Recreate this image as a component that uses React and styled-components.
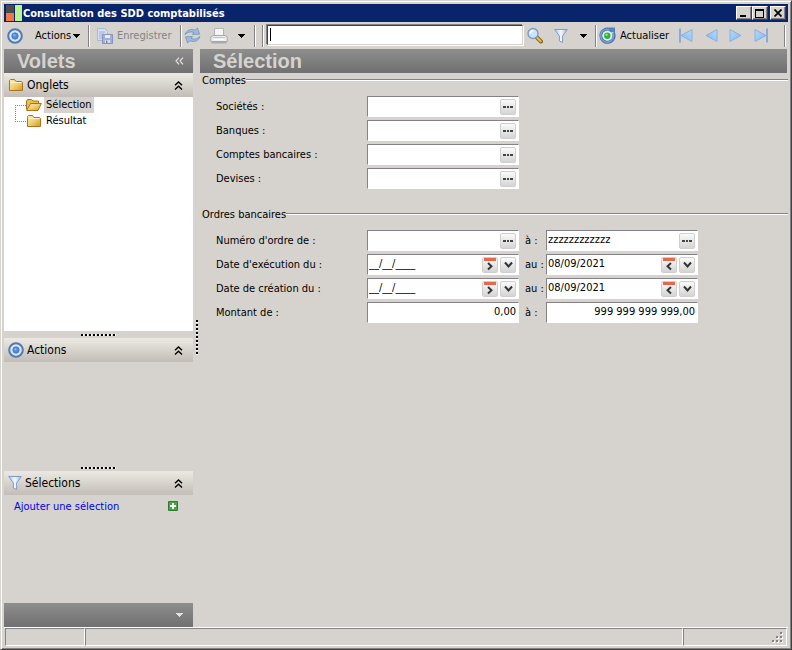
import styled, { createGlobalStyle, css } from "styled-components"

const GlobalStyle = createGlobalStyle`
  *, *::before, *::after {
    box-sizing: border-box;
  }
  body {
    margin: 0;
    background: #d6d3ce;
  }
  body, button, input {
    font-family: "DejaVu Sans Condensed", "DejaVu Sans", sans-serif;
    font-size: 11px;
    color: #000;
  }
  button {
    padding: 0;
    border: 0;
    background: none;
  }
  svg {
    display: block;
    flex: none;
  }
`

/* ---------- icons ---------- */

const Gradients = () => (
  <Defs width="0" height="0" aria-hidden="true">
    <defs>
      <linearGradient id="gold" x1="0" y1="0" x2="1" y2="1">
        <stop offset="0" stopColor="#fdeeb0" />
        <stop offset="0.5" stopColor="#f2cf72" />
        <stop offset="1" stopColor="#d8942a" />
      </linearGradient>
      <linearGradient id="sky" x1="0" y1="0" x2="1" y2="1">
        <stop offset="0" stopColor="#b4dcfa" />
        <stop offset="1" stopColor="#7fb6ec" />
      </linearGradient>
      <linearGradient id="funnel" x1="0" y1="0" x2="1" y2="0">
        <stop offset="0" stopColor="#a9c8f0" />
        <stop offset="0.5" stopColor="#f4f9ff" />
        <stop offset="1" stopColor="#94b6e6" />
      </linearGradient>
    </defs>
  </Defs>
)

const TargetIcon = () => (
  <svg width="16" height="16" viewBox="0 0 16 16">
    <circle cx="8" cy="8" r="6.8" fill="#dde8f6" stroke="#5079b8" strokeWidth="2" />
    <circle cx="8" cy="8" r="3.2" fill="#4f8edb" />
    <circle cx="8" cy="8" r="3.2" fill="none" stroke="#3c6fbb" strokeWidth="0.8" />
    <circle cx="7.4" cy="7.2" r="1.1" fill="#7dbcf5" />
  </svg>
)

const FolderIcon = () => (
  <svg width="16" height="14" viewBox="0 0 16 14">
    <path d="M1.5 12.5V2.5L2.5 1.5H6.5L8 3.5H13.5L14.5 4.5V12.5Z" fill="url(#gold)" stroke="#a8741c" />
    <path d="M2.5 4.5H13.5" stroke="#fff6d0" />
  </svg>
)

const OpenFolderIcon = () => (
  <svg width="16" height="14" viewBox="0 0 16 14">
    <path d="M0.5 11.5V3L1.5 1.5H5.5L7 3H12.5V5.5" fill="#e9bd58" stroke="#a8741c" />
    <path d="M0.7 12.5L4.5 5.5H15.3L12 12.5Z" fill="url(#gold)" stroke="#a8741c" />
  </svg>
)

const SaveIcon = () => (
  <svg width="17" height="17" viewBox="0 0 17 17">
    <path d="M1.5 1.5H8.5L11.5 4.5V13.5H1.5Z" fill="#d4dff0" stroke="#a9b9d6" />
    <path d="M3 5H9M3 7H8M3 9H6M3 11H6" stroke="#9fb2d3" />
    <path d="M6.5 7.5H16.5V16.5H6.5Z" fill="#a2b0d8" stroke="#8493c0" />
    <path d="M9 8H14V11H9Z" fill="#e9edf7" />
    <path d="M9 13H14V16H9Z" fill="#d9deed" />
    <path d="M10 13.5H11.5V16H10Z" fill="#7181b0" />
  </svg>
)

const SyncIcon = () => (
  <svg width="17" height="17" viewBox="0 0 17 17">
    <path d="M1 7.5C2.5 3 7 1.5 11 3.2L13.5 1L15.5 7.2L8.5 7.4L10 5.6C7 4.2 4 5 1 7.5Z" fill="#9dbcde" stroke="#6f93be" strokeWidth="0.8" />
    <path d="M16 9.5C14.5 14 10 15.5 6 13.8L3.5 16L1.5 9.8L8.5 9.6L7 11.4C10 12.8 13 12 16 9.5Z" fill="#9dbcde" stroke="#6f93be" strokeWidth="0.8" />
  </svg>
)

const PrinterIcon = () => (
  <svg width="18" height="18" viewBox="0 0 18 18">
    <path d="M4.5 1.5H13.5V9H4.5Z" fill="#f6f6f6" stroke="#b4b4b4" />
    <path d="M0.8 10L3 8.5H15L17.2 10V14.5H0.8Z" fill="#eee" stroke="#a9a9a9" />
    <path d="M3 10.5H15" stroke="#c4c4c4" />
    <path d="M1.5 15H16.5V16.5H1.5Z" fill="#aaa" />
    <path d="M4 12.5H14" stroke="#fff" />
  </svg>
)

const SearchIcon = () => (
  <svg width="16" height="17" viewBox="0 0 16 17">
    <path d="M9.5 10L14 14.5" stroke="#86601e" strokeWidth="4" strokeLinecap="round" />
    <path d="M10 10.5L13.7 14.2" stroke="#eab94a" strokeWidth="2.2" strokeLinecap="round" />
    <circle cx="6" cy="6.5" r="5" fill="#cbe4fb" stroke="#7c9cd0" strokeWidth="1.4" />
    <path d="M3.3 6.5A3 3 0 0 1 6.3 3.7" stroke="#fff" strokeWidth="1.5" fill="none" />
  </svg>
)

const FunnelIcon = () => (
  <svg width="14" height="16" viewBox="0 0 14 16">
    <path d="M0.7 1.5H13.3L8.6 8V14.5L5.4 13V8Z" fill="url(#funnel)" stroke="#7e9cca" />
  </svg>
)

const ReloadIcon = () => (
  <svg width="17" height="17" viewBox="0 0 17 17">
    <path d="M14.6 6.2A6.6 6.6 0 1 1 10.5 2.4" fill="none" stroke="#4a6fae" strokeWidth="3" />
    <path d="M14.3 6.5A6.5 6.5 0 1 1 10.4 2.6" fill="none" stroke="#739fda" strokeWidth="1.6" />
    <path d="M10 0.5H16V6.5L13.5 5L11.5 6L10 4Z" fill="#5482c4" />
    <circle cx="8.3" cy="8.7" r="4.8" fill="#e9f3ea" />
    <circle cx="8.3" cy="8.7" r="3.2" fill="#2eb13e" />
    <circle cx="7.6" cy="7.7" r="1.2" fill="#8ae68c" />
  </svg>
)

const NavIcon = ({ back, bar }) => (
  <svg width="16" height="15" viewBox="0 0 16 15">
    <g transform={back ? 'translate(16 0) scale(-1 1)' : undefined}>
      <path d="M2 1.5L13 7.5L2 13.5Z" fill="url(#sky)" stroke="#8caee0" />
      {bar && <path d="M14 0.5V14.5" stroke="#8ca8dc" strokeWidth="2" />}
    </g>
  </svg>
)

const Caret = ({ color = '#000' }) => (
  <svg width="8" height="4" viewBox="0 0 8 4" shapeRendering="crispEdges">
    <path d="M0 0H8L4 4Z" fill={color} />
  </svg>
)

const Chevrons = () => (
  <svg width="9" height="9" viewBox="0 0 9 9" fill="none" stroke="#000" strokeWidth="1.4">
    <path d="M1 4.2L4.5 1L8 4.2M1 8.5L4.5 5.3L8 8.5" />
  </svg>
)

const CollapseIcon = () => (
  <svg width="9" height="8" viewBox="0 0 9 8" fill="none" stroke="#e4e2de" strokeWidth="1.2">
    <path d="M4 0.7L1 4L4 7.3M8 0.7L5 4L8 7.3" />
  </svg>
)

const PlusIcon = () => (
  <svg width="10" height="10" viewBox="0 0 10 10">
    <rect width="10" height="10" rx="1" fill="#2e7d2e" />
    <rect x="1" y="1" width="8" height="8" fill="#4ca544" />
    <path d="M5 2V8M2 5H8" stroke="#fff" strokeWidth="2" />
  </svg>
)

const DotsIcon = () => (
  <svg width="10" height="5" viewBox="0 0 10 5" fill="#444">
    <rect x="0" y="2" width="3" height="2" />
    <rect x="4" y="2" width="2" height="2" />
    <rect x="7" y="2" width="3" height="2" />
  </svg>
)

const DownIcon = () => (
  <svg width="9" height="8" viewBox="0 0 9 8" fill="none" stroke="#333" strokeWidth="2">
    <path d="M1 1.5L4.5 5.5L8 1.5" />
  </svg>
)

const CalendarIcon = ({ back }) => (
  <svg width="12" height="13" viewBox="0 0 12 13" fill="none">
    <rect width="12" height="3" fill="#e2694b" />
    <path d={back ? 'M8 5L4.5 8.2L8 11.5' : 'M4 5L7.5 8.2L4 11.5'} stroke="#333" strokeWidth="1.9" />
  </svg>
)

const LogoIcon = () => (
  <svg width="16" height="16" viewBox="0 0 16 16" shapeRendering="crispEdges">
    <rect width="8" height="8" fill="#4b4b49" />
    <rect y="8" width="8" height="8" fill="#f0764c" />
    <rect x="9" width="7" height="16" fill="#b9f58e" />
  </svg>
)

const SizeGrip = () => (
  <svg width="12" height="12" viewBox="0 0 12 12" shapeRendering="crispEdges">
    {[[8, 0], [4, 4], [8, 4], [0, 8], [4, 8], [8, 8]].map(([x, y]) => (
      <g key={`${x}-${y}`}>
        <rect x={x + 1} y={y + 1} width="2" height="2" fill="#fff" />
        <rect x={x} y={y} width="2" height="2" fill="#848284" />
      </g>
    ))}
  </svg>
)

/* ---------- parts ---------- */

const Tool = ({ icon, children, label, disabled }) => (
  <ToolButton type="button" aria-label={label} disabled={disabled}>
    {icon}
    {children}
  </ToolButton>
)

const Panel = ({ icon, title }) => (
  <PanelHeader>
    {icon}
    <h2>{title}</h2>
    <button type="button" aria-label={`Réduire ${title}`}><Chevrons /></button>
  </PanelHeader>
)

const Field = ({ id, value = '', kind = 'lookup', right }) => (
  <FieldBox>
    <input id={id} defaultValue={value} className={kind === 'amount' ? 'amount' : ''} />
    {kind === 'lookup' && <FieldButton type="button" aria-label="Rechercher"><DotsIcon /></FieldButton>}
    {kind === 'date' && (
      <>
        <FieldButton type="button" aria-label="Borne"><CalendarIcon back={right} /></FieldButton>
        <FieldButton type="button" aria-label="Calendrier"><DownIcon /></FieldButton>
      </>
    )}
  </FieldBox>
)

const accounts = [
  { id: 'societes', label: 'Sociétés :' },
  { id: 'banques', label: 'Banques :' },
  { id: 'comptes', label: 'Comptes bancaires :' },
  { id: 'devises', label: 'Devises :' },
]

const orders = [
  { id: 'numero', label: "Numéro d'ordre de :", kind: 'lookup', from: '', link: 'à :', to: 'zzzzzzzzzzzz' },
  { id: 'execution', label: "Date d'exécution du :", kind: 'date', from: '__/__/____', link: 'au :', to: '08/09/2021' },
  { id: 'creation', label: 'Date de création du :', kind: 'date', from: '__/__/____', link: 'au :', to: '08/09/2021' },
  { id: 'montant', label: 'Montant de :', kind: 'amount', from: '0,00', link: 'à :', to: '999 999 999 999,00' },
]

export default function App() {
  return (
    <Window>
      <GlobalStyle />
      <Gradients />
      <TitleBar>
        <LogoIcon />
        <h1>Consultation des SDD comptabilisés</h1>
        <WindowButton type="button" aria-label="Réduire">
          <svg width="8" height="8"><path d="M0 6H6V8H0Z" /></svg>
        </WindowButton>
        <WindowButton type="button" aria-label="Agrandir">
          <svg width="10" height="9" shapeRendering="crispEdges"><path d="M0 0H9V9H0ZM1 2V8H8V2Z" fillRule="evenodd" /></svg>
        </WindowButton>
        <WindowButton type="button" aria-label="Fermer" $apart>
          <svg width="8" height="8" stroke="#000" strokeWidth="1.7"><path d="M0.5 0.5L7.5 7.5M7.5 0.5L0.5 7.5" /></svg>
        </WindowButton>
      </TitleBar>

      <Toolbar>
        <ToolGroup $width={85}>
          <Tool icon={<TargetIcon />} label="Cible" />
          <Tool><ToolText>Actions</ToolText><Caret /></Tool>
        </ToolGroup>
        <ToolGroup $width={92}>
          <Tool icon={<SaveIcon />} disabled>Enregistrer</Tool>
        </ToolGroup>
        <ToolGroup $width={74} $gap={9}>
          <Tool icon={<SyncIcon />} label="Synchroniser" />
          <Tool icon={<PrinterIcon />} label="Imprimer" />
          <Tool icon={<Caret />} label="Options d'impression" />
        </ToolGroup>
        <ToolGroup $width={8} />
        <SearchBox>
          <TextCaret />
          <input aria-label="Recherche" />
        </SearchBox>
        <ToolGroup $width={72} $gap={11}>
          <Tool icon={<SearchIcon />} label="Rechercher" />
          <Tool icon={<FunnelIcon />} label="Filtrer" />
          <Tool icon={<Caret />} label="Options de filtre" />
        </ToolGroup>
        <ToolGroup $width={189} $gap={9}>
          <Tool icon={<ReloadIcon />}>Actualiser</Tool>
          <Tool icon={<NavIcon back bar />} label="Premier" />
          <Tool icon={<NavIcon back />} label="Précédent" />
          <Tool icon={<NavIcon />} label="Suivant" />
          <Tool icon={<NavIcon bar />} label="Dernier" />
        </ToolGroup>
      </Toolbar>

      <Body>
        <Sidebar>
          <Banner>
            <h2>Volets</h2>
            <button type="button" aria-label="Masquer les volets"><CollapseIcon /></button>
          </Banner>
          <Panel icon={<FolderIcon />} title="Onglets" />
          <Tree>
            <li><OpenFolderIcon /><TreeLink href="#selection" $active>Sélection</TreeLink></li>
            <li><FolderIcon /><TreeLink href="#resultat">Résultat</TreeLink></li>
          </Tree>
          <Splitter><Grip /></Splitter>
          <Panel icon={<TargetIcon />} title="Actions" />
          <PanelBody $height={102} />
          <Splitter><Grip /></Splitter>
          <Panel icon={<FunnelIcon />} title="Sélections" />
          <PanelBody $height={108}>
            <AddLink href="#ajouter">Ajouter une sélection <PlusIcon /></AddLink>
          </PanelBody>
          <SidebarFooter type="button" aria-label="Plus de volets">
            <Caret color="#e4e2de" />
          </SidebarFooter>
        </Sidebar>
        <Splitter $vertical><Grip $vertical /></Splitter>
        <Main>
          <Banner $main><h2>Sélection</h2></Banner>
          <Group>
            <h3>Comptes</h3>
            <Rows>
              {accounts.map(item => (
                <Row key={item.id}>
                  <label htmlFor={item.id}>{item.label}</label>
                  <Field id={item.id} />
                </Row>
              ))}
            </Rows>
          </Group>
          <Group>
            <h3>Ordres bancaires</h3>
            <Rows>
              {orders.map(item => (
                <Row key={item.id}>
                  <label htmlFor={item.id}>{item.label}</label>
                  <Field id={item.id} kind={item.kind} value={item.from} />
                  <label htmlFor={`${item.id}-fin`} className="link">{item.link}</label>
                  <Field id={`${item.id}-fin`} kind={item.kind} value={item.to} right />
                </Row>
              ))}
            </Rows>
          </Group>
        </Main>
      </Body>

      <StatusBar>
        <span />
        <span />
        <span><SizeGrip /></span>
      </StatusBar>
    </Window>
  )
}

/* ---------- styles ---------- */

const Defs = styled.svg`
  position: absolute;
`
const Window = styled.div`
  display: flex;
  flex-direction: column;
  min-height: 100vh;
  padding: 3px;
  border: 1px solid;
  border-color: #d6d3ce #424142 #424142 #d6d3ce;
  box-shadow: inset 1px 1px 0 #fff, inset -1px -1px 0 #848284;
`
const TitleBar = styled.header`
  display: flex;
  align-items: center;
  height: 18px;
  padding: 0 2px;
  background: #08246b;
  h1 {
    flex: 1;
    margin: 0 0 0 1px;
    font-size: 11px;
    color: #fff;
  }
`
const WindowButton = styled.button`
  display: flex;
  align-items: center;
  justify-content: center;
  width: 16px;
  height: 14px;
  margin-left: ${props => props.$apart ? '2px' : '0'};
  background: #d6d3ce;
  border: 1px solid;
  border-color: #fff #424142 #424142 #fff;
  box-shadow: inset -1px -1px 0 #848284;
`
const Toolbar = styled.div`
  display: flex;
  align-items: center;
  height: 27px;
  padding-right: 3px;
`
const ToolGroup = styled.div`
  display: flex;
  flex: none;
  align-items: center;
  gap: ${props => props.$gap ?? 12}px;
  width: ${props => props.$width}px;
  height: 22px;
  padding-left: ${props => props.$width > 20 ? '3px' : '0'};
  border-right: 1px solid #848284;
  box-shadow: 1px 0 0 #fff;
`
const ToolButton = styled.button`
  display: flex;
  align-items: center;
  gap: 4px;
  white-space: nowrap;
  &:disabled {
    margin-left: 4px;
    color: #848284;
  }
`
const ToolText = styled.span`
  margin-right: -3px;
`
const SearchBox = styled.div`
  display: flex;
  flex: 1;
  height: 20px;
  margin: 0 1px 2px 4px;
  padding: 1px;
  background: #fff;
  border: 1px solid;
  border-color: #424142 #d6d3ce #d6d3ce #424142;
  box-shadow: -1px -1px 0 #848284, 1px 1px 0 #fff;
  input {
    flex: 1;
    min-width: 0;
    padding: 0;
    border: 0;
    outline: 0;
  }
`
const TextCaret = styled.i`
  width: 1px;
  height: 13px;
  margin: 1px;
  background: #000;
`
const Body = styled.div`
  display: flex;
  flex: 1;
`
const Sidebar = styled.aside`
  display: flex;
  flex-direction: column;
  width: 189px;
`
const Banner = styled.div`
  display: flex;
  align-items: center;
  justify-content: space-between;
  flex: none;
  height: 24px;
  padding: 0 9px 0 13px;
  margin-right: ${props => props.$main ? '1px' : '0'};
  background: linear-gradient(#8e8e8e, #707070);
  h2 {
    margin: 0;
    font: bold 20px/24px "Liberation Sans", Arial, sans-serif;
    color: #d6d3ce;
  }
`
const PanelHeader = styled.div`
  display: flex;
  align-items: center;
  flex: none;
  gap: 3px;
  height: 24px;
  padding: 0 10px 0 4px;
  background: linear-gradient(#ece9e3, #c2bdb6);
  h2 {
    flex: 1;
    margin: 0;
    font-size: 12px;
    font-weight: normal;
  }
`
const PanelBody = styled.div`
  flex: none;
  height: ${props => props.$height}px;
`
const Tree = styled.ul`
  flex: 1;
  margin: 0;
  padding: 0 0 0 11px;
  background: #fff;
  list-style: none;
  li {
    display: flex;
    align-items: center;
    height: 16px;
  }
  li::before {
    content: "";
    align-self: flex-start;
    width: 11px;
    height: 9px;
    border-bottom: 1px dotted #848284;
  }
  li + li::before {
    height: 17px;
    margin-top: -8px;
    border-left: 1px dotted #848284;
  }
`
const TreeLink = styled.a`
  margin-left: 2px;
  padding: 0 2px;
  line-height: 16px;
  color: #000;
  text-decoration: none;
  background: ${props => props.$active ? '#d6d3ce' : 'none'};
`
const Splitter = styled.div`
  display: flex;
  flex: none;
  align-items: center;
  justify-content: center;
  ${props => props.$vertical ? css`width: 7px;` : css`height: 7px;`}
`
const Grip = styled.div`
  width: ${props => props.$vertical ? '2px' : '36px'};
  height: ${props => props.$vertical ? '36px' : '2px'};
  background: repeating-linear-gradient(${props => props.$vertical ? '180deg' : '90deg'}, #000 0 2px, #fff 2px 3px, #d6d3ce 3px 4px);
`
const AddLink = styled.a`
  display: flex;
  align-items: center;
  justify-content: space-between;
  height: 22px;
  padding: 0 15px 0 10px;
  color: #0000f0;
  text-decoration: none;
`
const SidebarFooter = styled.button`
  display: flex;
  align-items: center;
  justify-content: flex-end;
  height: 24px;
  padding-right: 10px;
  background: linear-gradient(#8e8e8e, #707070);
`
const Main = styled.main`
  flex: 1;
`
const Group = styled.section`
  margin-bottom: 10px;
  h3 {
    display: flex;
    align-items: center;
    height: 14px;
    margin: 0;
    padding-left: 2px;
    font-size: 11px;
    font-weight: normal;
  }
  h3::after {
    content: "";
    flex: 1;
    height: 2px;
    background: linear-gradient(#848284 50%, #fff 50%);
  }
`
const Rows = styled.div`
  display: flex;
  flex-direction: column;
  gap: 3px;
  padding: 9px 0 8px 16px;
`
const Row = styled.div`
  display: grid;
  grid-template-columns: 151px 152px 27px 152px;
  align-items: center;
  .link {
    padding-left: 6px;
    white-space: nowrap;
  }
`
const FieldBox = styled.div`
  display: flex;
  align-items: center;
  gap: 2px;
  height: 21px;
  padding-right: 2px;
  background: #fff;
  border: 1px solid;
  border-color: #848284 #fff #fff #848284;
  input {
    flex: 1;
    min-width: 0;
    height: 16px;
    margin-bottom: 2px;
    padding: 0 0 0 1px;
    border: 0;
    outline: 0;
    background: none;
  }
  .amount {
    text-align: right;
  }
`
const FieldButton = styled.button`
  display: flex;
  align-items: center;
  justify-content: center;
  width: 16px;
  height: 16px;
  background: linear-gradient(#fafafa, #d4d4d4);
  border: 1px solid #cfcfcf;
  border-radius: 2px;
`
const StatusBar = styled.footer`
  display: flex;
  height: 19px;
  padding: 0 1px;
  border-top: 1px solid #fff;
  span {
    display: flex;
    align-items: flex-end;
    justify-content: flex-end;
    width: 80px;
    padding: 0 2px 1px;
    border: 1px solid;
    border-color: #848284 #fff #fff #848284;
  }
  span:nth-child(2) {
    flex: 1;
  }
  span:nth-child(3) {
    width: 104px;
  }
`
